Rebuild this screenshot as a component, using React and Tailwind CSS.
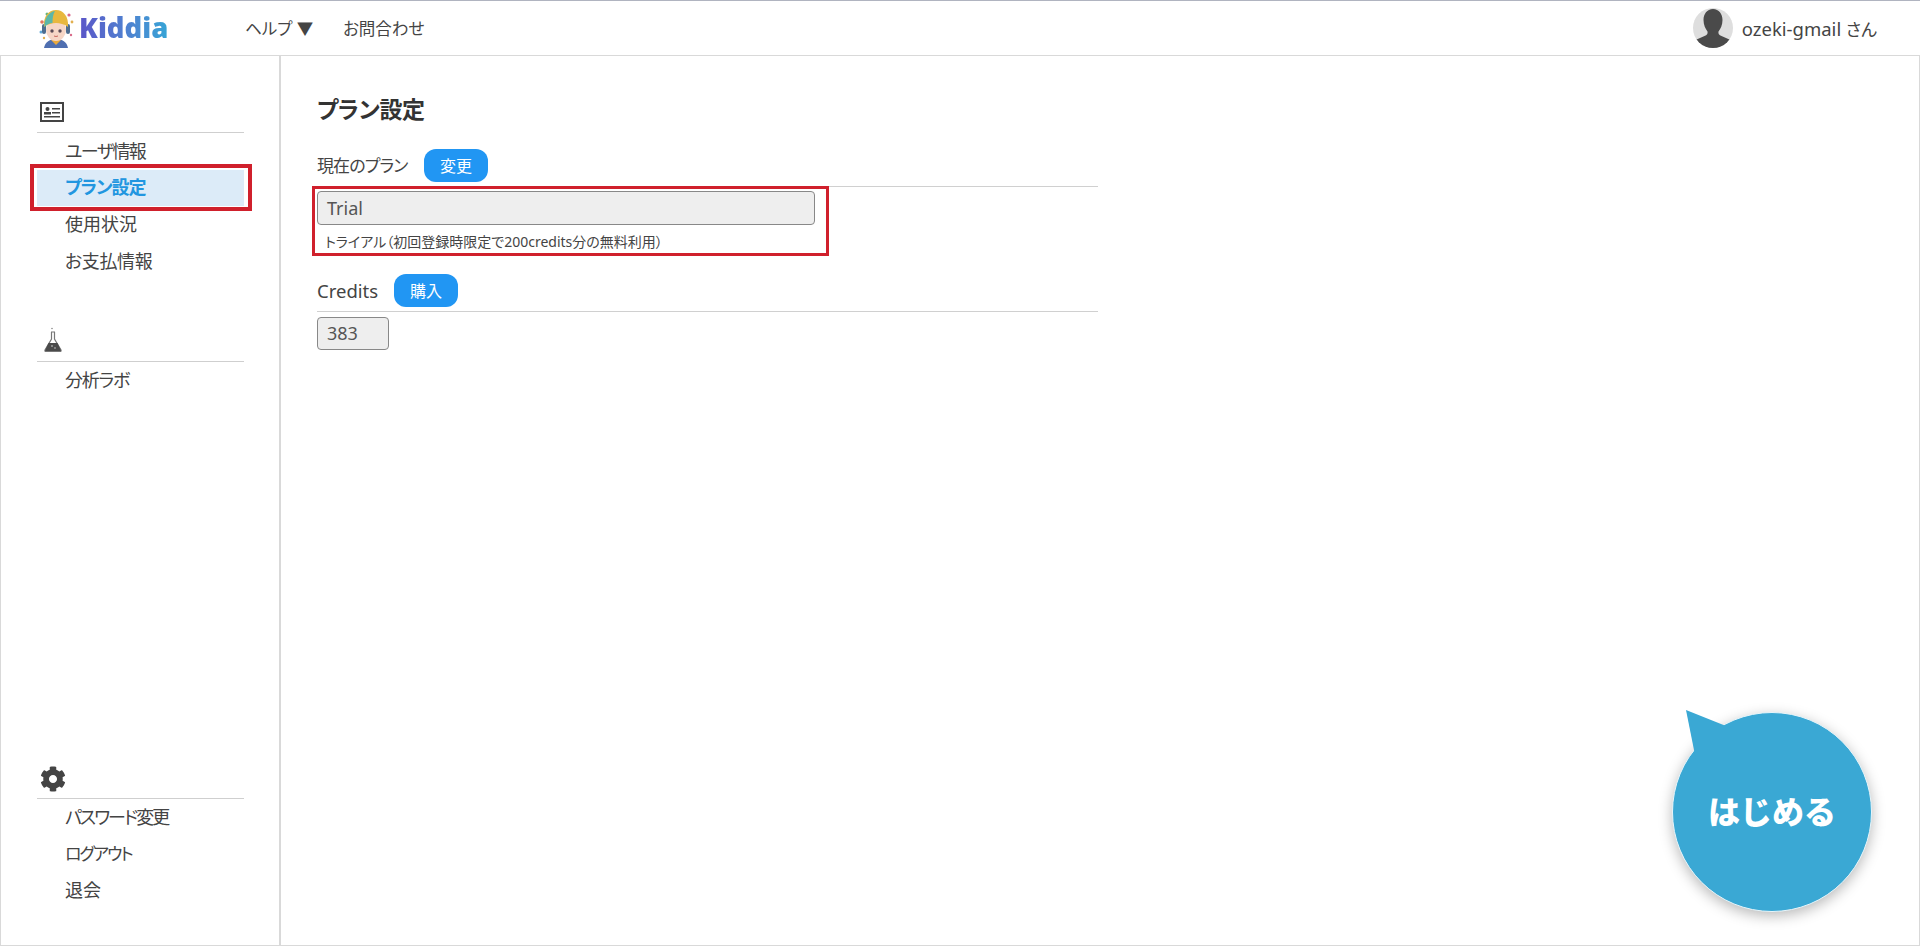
import React from "react";
import { FaCog } from "react-icons/fa";

const font = { fontFamily: '"Noto Sans", "Noto Sans CJK JP", sans-serif' };

const LogoMark = () => (
  <svg width="36" height="42" viewBox="0 0 36 42">
    <circle cx="4" cy="15" r="1.8" fill="#e2775f" />
    <circle cx="3" cy="25" r="1.5" fill="#5fa8d8" />
    <circle cx="6" cy="31" r="1.2" fill="#e2b04f" />
    <circle cx="31" cy="8" r="1.6" fill="#d96a8a" />
    <circle cx="34" cy="15" r="1.4" fill="#e2b04f" />
    <circle cx="33" cy="28" r="1.2" fill="#d96a8a" />
    <circle cx="9" cy="7" r="1.5" fill="#67b37c" />
    <path d="M6 41c1-6 6-9 12-9s11 3 12 9z" fill="#4f6fb0" />
    <path d="M13 33l5 5 5-5z" fill="#e9a93c" />
    <rect x="4" y="17" width="4" height="10" rx="2" fill="#4d6d90" />
    <rect x="28" y="17" width="4" height="10" rx="2" fill="#4d6d90" />
    <ellipse cx="18" cy="23" rx="10" ry="11" fill="#f6d6c6" />
    <path d="M6 20C5 9 11 3 18 3s13 6 12 17c-4-3-8-4-12-4s-8 1-12 4z" fill="#e8b83e" />
    <path d="M6.500 20C6 11 11 5 17 4c-2 3-2.500 7-2.500 12-3 0-6 2-8 4z" fill="#5cb6a8" />
    <circle cx="14" cy="24" r="1.7" fill="#5a4a55" />
    <circle cx="22" cy="24" r="1.7" fill="#5a4a55" />
    <path d="M16 29q2 1 4 0" stroke="#c9685f" strokeWidth="1" fill="none" />
  </svg>
);

const CardIcon = () => (
  <svg width="24" height="20" viewBox="0 0 24 20">
    <rect x="1" y="1" width="22" height="18" fill="none" stroke="#444" strokeWidth="2" />
    <circle cx="7.500" cy="7" r="2" fill="#444" />
    <rect x="4" y="10" width="7" height="2.500" fill="#444" />
    <rect x="4" y="14" width="16" height="1.500" fill="#444" />
    <rect x="12" y="6" width="8" height="1.500" fill="#444" />
    <rect x="12" y="10" width="8" height="1.500" fill="#444" />
  </svg>
);

const FlaskIcon = () => (
  <svg width="20" height="26" viewBox="0 0 20 26" className="ml-[3px]">
    <circle cx="9" cy="1.500" r="0.8" fill="#888" />
    <path d="M8 5h4M8.500 5v7L2 23q-.5 1.500 1 1.500h14q1.500 0 1-1.500L11.500 12V5" fill="none" stroke="#777" strokeWidth="1.200" />
    <path d="M5.500 16h9l3.500 7.500q0 .5-1 .5H3q-1 0-1-.5z" fill="#4a4a4a" />
    <circle cx="9" cy="19" r="0.8" fill="#ddd" />
    <circle cx="12" cy="21" r="0.7" fill="#ddd" />
  </svg>
);

const Avatar = () => (
  <svg width="40" height="40" viewBox="0 0 40 40" className="rounded-full">
    <rect width="40" height="40" fill="#dedede" />
    <path d="M20 1c6 0 9.500 5 9.500 11 0 5-2 9-4 11.500-.5 2 .5 3.500 3 4.500l9 4v8H2.500v-8l9-4c2.500-1 3.500-2.500 3-4.500-2-2.500-4-6.500-4-11.500C10.500 6 14 1 20 1z" fill="#4a4a4a" />
  </svg>
);

const SideItem = ({ label, size, active }) => (
  <div
    className={`relative h-[36.6px] pl-[28px] flex items-center whitespace-nowrap ${size} ${
      active ? "bg-[#dcebf8] text-[#2196e0] font-bold" : "text-[#444444]"
    }`}
  >
    {label}
    {active && (
      <span className="absolute top-[-6px] bottom-[-5px] left-[-7px] right-[-8px] border-[4px] border-[#d0202c]" />
    )}
  </div>
);

const SideSection = ({ icon, items, pad, className = "" }) => (
  <div className={className}>
    <div className={`pl-[3px] h-[30px] flex items-end border-b border-[#cfcfcf] box-content ${pad}`}>{icon}</div>
    {items.map((item) => (
      <SideItem key={item.label} {...item} />
    ))}
  </div>
);

const Pill = ({ children }) => (
  <button className="w-[64px] h-[33px] rounded-[12px] bg-[#2196f3] text-white text-[16px]">{children}</button>
);

const Tail = () => (
  <svg width="50" height="50" viewBox="0 0 50 50" className="absolute left-[14px] top-0">
    <polygon points="0,0 45,18 10,50" fill="#3aa8d4" />
  </svg>
);

const StartButton = () => (
  <div className="absolute left-[1672px] top-[710px] w-[200px] h-[202px]">
    <div className="absolute left-0 top-[2px] w-[200px] h-[200px] rounded-full bg-[#3aa8d4] border border-[#e8f6fb] shadow-[0_4px_14px_rgba(0,0,0,0.28)] flex items-center justify-center text-white font-black text-[32px]">
      はじめる
    </div>
    <Tail />
  </div>
);

const menu1 = [
  { label: "ユーザ情報", size: "text-[18px] tracking-[-1.6px]" },
  { label: "プラン設定", size: "text-[18px] tracking-[-1px]", active: true },
  { label: "使用状況", size: "text-[18px]" },
  { label: "お支払情報", size: "text-[18px] tracking-[-0.4px]" },
];
const menu2 = [{ label: "分析ラボ", size: "text-[18px] tracking-[-1.2px]" }];
const menu3 = [
  { label: "パスワード変更", size: "text-[18px] tracking-[-2px]" },
  { label: "ログアウト", size: "text-[17px] tracking-[-1.900px]" },
  { label: "退会", size: "text-[18px]" },
];

export default function App() {
  return (
    <div style={font} className="relative w-[1920px] h-[946px] bg-white overflow-hidden flex flex-col text-[#444444]">
      <header className="h-[56px] border-t border-t-[#b0b4c0] border-b border-b-[#d9d9d9] flex items-center shrink-0">
        <div className="ml-[38px] w-[207px] flex items-center">
          <LogoMark />
          <span className="ml-[5px] text-[27.500px] leading-none font-extrabold bg-gradient-to-r from-[#5a55c8] to-[#35a4d6] bg-clip-text text-transparent" style={{ fontFamily: '"Open Sans", sans-serif' }}>
            Kiddia
          </span>
        </div>
        <nav className="flex items-center text-[16.500px] pt-[2px] [font-feature-settings:'palt']">
          <span className="w-[98px]">ヘルプ ▼</span>
          <span>お問合わせ</span>
        </nav>
        <div className="ml-auto mr-[43px] flex items-center gap-[9px]">
          <Avatar />
          <span className="text-[18.500px] pt-[2px] [font-feature-settings:'palt']">
            ozeki-gmail <span className="text-[17px]">さん</span>
          </span>
        </div>
      </header>

      <div className="flex-1 flex border-l border-r border-b border-[#d9d9d9] min-h-0">
        <aside className="w-[280px] shrink-0 border-r-2 border-[#d9d9d9] pl-[36px] pr-[35px] pt-[36px] pb-[36px] flex flex-col [font-feature-settings:'palt']">
          <SideSection icon={<CardIcon />} items={menu1} pad="pb-[10px]" />
          <SideSection icon={<FlaskIcon />} items={menu2} pad="pb-[8px]" className="mt-[44px]" />
          <SideSection icon={<FaCog size={26} color="#444" />} items={menu3} pad="pb-[6px]" className="mt-auto" />
        </aside>

        <main className="flex-1 pl-[36px] pt-[39px] [font-feature-settings:'palt']">
          <h1 className="text-[23px] tracking-[-0.3px] font-bold leading-[28px] text-[#333333]">プラン設定</h1>

          <div className="w-[781px] mt-[26px]">
            <div className="flex items-center gap-[15px] pb-[4px] border-b border-[#d0d0d0]">
              <span className="w-[92px] text-[17px] tracking-[-0.9px] whitespace-nowrap">現在のプラン</span>
              <Pill>変更</Pill>
            </div>
            <div className="relative mt-[4px] w-[498px]">
              <div className="h-[34px] rounded-[4px] border border-[#888888] bg-[#eeeeee] px-[9px] flex items-center text-[18px] text-[#555555]">
                Trial
              </div>
              <p className="mt-[8px] pl-[8px] text-[14px] leading-[18px] text-[#444444]">
                トライアル（初回登録時限定で200credits分の無料利用）
              </p>
              <span className="absolute top-[-5px] left-[-5px] right-[-14px] bottom-[-5px] border-[3px] border-[#d0202c]" />
            </div>

            <div className="flex items-center gap-[16px] pb-[4px] mt-[23px] border-b border-[#d0d0d0]">
              <span className="w-[61px] text-[18.500px]">Credits</span>
              <Pill>購入</Pill>
            </div>
            <div className="mt-[5px] w-[72px] h-[33px] rounded-[4px] border border-[#888888] bg-[#eeeeee] px-[9px] flex items-center text-[18px] text-[#555555]">
              383
            </div>
          </div>
        </main>
      </div>

      <StartButton />
    </div>
  );
}
